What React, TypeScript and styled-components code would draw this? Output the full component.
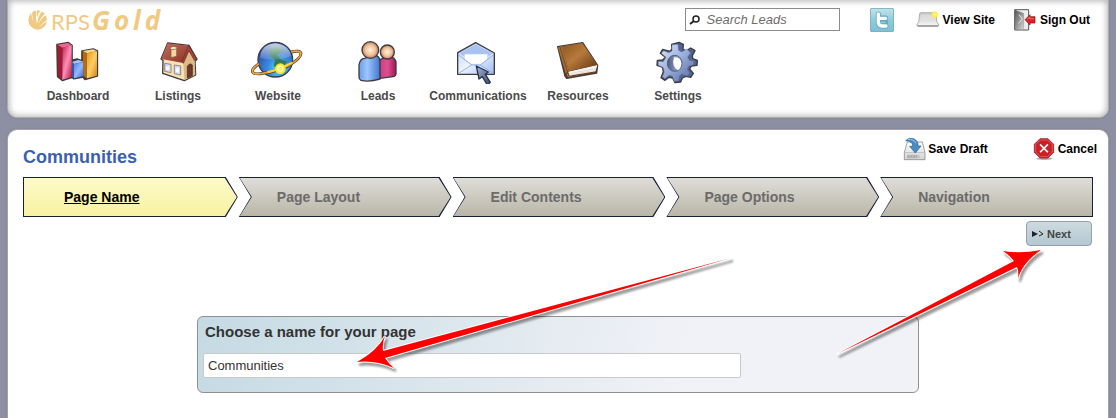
import React from 'react';
import styled, { createGlobalStyle } from 'styled-components';

const GlobalStyle = createGlobalStyle`
  * { box-sizing: border-box; }
  body {
    margin: 0;
    background: #8d90a2;
    color: #000;
    font-family: "Liberation Sans", Arial, sans-serif;
    font-size: 12px;
  }
`;

const Page = styled.div`
  display: flex;
  flex-direction: column;
  gap: 11px;
  min-height: 100vh;
  padding: 0 7px;
`;

const Header = styled.header`
  height: 118px;
  padding: 8px 18px 0 20px;
  background: #fff;
  border: 1px solid #acacb0;
  border-top: 0;
  border-radius: 0 0 10px 10px;
  box-shadow: inset 0 0 6px 1px #b0b0b0, 0 0 2px #77798a;
`;

const TopBar = styled.div`
  display: flex;
  justify-content: space-between;
  height: 30px;
`;

const Logo = styled.a`
  display: flex;
  align-items: baseline;
  height: 24px;
  color: #f0ca82;
  font-family: "Open Sans", sans-serif;
  font-size: 24px;
  line-height: 24px;
  text-decoration: none;
`;

const LogoLight = styled.span`
  margin-left: 3px;
  font-family: Lato, sans-serif;
  font-size: 22px;
  font-weight: 400;
`;

const LogoBold = styled.span`
  display: flex;
  gap: 4px;
  margin-left: 2px;
  font-size: 26px;
  font-weight: 700;
  font-style: italic;
`;

const Tools = styled.div`
  display: flex;
  align-items: flex-start;
`;

const SearchBox = styled.label`
  display: flex;
  align-items: center;
  width: 155px;
  height: 23px;
  margin-right: 30px;
  padding-left: 3px;
  background: #fff;
  border: 1px solid #8c8c8c;
`;

const SearchInput = styled.input`
  flex: 1;
  min-width: 0;
  padding: 0 0 0 6px;
  border: 0;
  outline: 0;
  background: transparent;
  font: italic 13px "Liberation Sans", Arial, sans-serif;
  &::placeholder { color: #6e6e6e; opacity: 1; }
`;

const ToolLink = styled.a<{ $space?: number }>`
  display: flex;
  align-items: center;
  gap: 3px;
  height: 24px;
  margin-left: ${(p) => p.$space ?? 0}px;
  color: #000;
  font-size: 12px;
  font-weight: 700;
  text-decoration: none;
  white-space: nowrap;
`;

const Nav = styled.nav`
  display: flex;
`;

const NavItem = styled.a`
  display: flex;
  flex-direction: column;
  align-items: center;
  width: 100px;
  gap: 4px;
  color: #4a4a4a;
  font-weight: 700;
  line-height: 16px;
  text-decoration: none;
`;

const Main = styled.main`
  position: relative;
  flex: 1;
  padding: 7px 15px 24px;
  background: #fff;
  border: 1px solid #a4a4a8;
  border-bottom: 0;
  border-radius: 10px 10px 0 0;
  box-shadow: 0 0 2px #77798a;
`;

const TitleRow = styled.div`
  display: flex;
  justify-content: space-between;
  height: 40px;
  margin-right: -4px;
`;

const Title = styled.h1`
  margin: 9px 0 0;
  color: #3b5fb2;
  font-size: 18px;
  line-height: 22px;
`;

const Actions = styled.div`
  display: flex;
  align-items: flex-start;
  gap: 45px;
`;

const ActionButton = styled.button`
  display: flex;
  align-items: center;
  gap: 1px;
  height: 24px;
  padding: 0;
  border: 0;
  background: none;
  color: #000;
  font: 700 12px "Liberation Sans", Arial, sans-serif;
  cursor: pointer;
`;

const Steps = styled.ol`
  display: flex;
  gap: 1px;
  margin: 0;
  padding: 0;
  list-style: none;
`;

type Edge = 'first' | 'middle' | 'last';

const shape = (edge: Edge) => {
  const right = edge === 'last' ? '100% 0, 100% 100%' : 'calc(100% - 12px) 0, 100% 50%, calc(100% - 12px) 100%';
  const left = edge === 'first' ? '0 100%' : '0 100%, 12px 50%';
  return `polygon(0 0, ${right}, ${left})`;
};

const Step = styled.li<{ $edge: Edge; $active?: boolean }>`
  flex: 1 1 ${(p) => (p.$edge === 'first' ? 4 : 2)}px;
  height: 40px;
  padding: 1px;
  background: #16203a;
  clip-path: ${(p) => shape(p.$edge)};

  a {
    display: block;
    height: 38px;
    padding-left: ${(p) => (p.$edge === 'first' ? 40 : 37)}px;
    clip-path: ${(p) => shape(p.$edge)};
    background: ${(p) =>
      p.$active ? 'linear-gradient(#fdfacb, #f7f2a0)' : 'linear-gradient(#dfddd7, #b9b6a8)'};
    color: ${(p) => (p.$active ? '#000' : '#6b6b6b')};
    font-size: 14px;
    font-weight: 700;
    line-height: 38px;
    text-decoration: ${(p) => (p.$active ? 'underline' : 'none')};
  }
`;

const NextButton = styled.button`
  display: flex;
  align-items: center;
  gap: 3px;
  width: 66px;
  height: 25px;
  margin: 4px 1px 0 auto;
  padding: 0 0 0 5px;
  border: 1px solid #9a9cb0;
  border-radius: 4px;
  background: linear-gradient(#cddbe0, #b3c8d0);
  color: #444;
  font: 700 11px "Liberation Sans", Arial, sans-serif;
  cursor: pointer;
`;

const NameCard = styled.form`
  width: 722px;
  max-width: 100%;
  margin: 70px auto 0;
  padding: 4px 5px 14px;
  border: 1px solid #8f9094;
  border-radius: 6px;
  background: linear-gradient(100deg, #c5dae3, #f1f2f7 68%);
`;

const NameLabel = styled.label`
  display: block;
  margin: 0 2px 11px;
  color: #333;
  font-size: 15px;
  font-weight: 700;
  line-height: 21px;
`;

const NameInput = styled.input`
  display: block;
  width: 538px;
  max-width: 100%;
  height: 25px;
  padding: 0 4px;
  border: 1px solid #c9c9c9;
  border-radius: 2px;
  background: #fff;
  color: #333;
  font: 13px "Liberation Sans", Arial, sans-serif;
`;

/* Pointer arrows drawn over the form */
const Arrow = styled.svg<{ $top: number }>`
  position: absolute;
  top: ${(p) => p.$top}px;
  pointer-events: none;
  overflow: visible;
  filter: drop-shadow(2px 3px 1px rgba(0, 0, 0, 0.4));
`;

const NameArrow = styled(Arrow)`
  left: calc(50% - 201px);
`;

const NextArrow = styled(Arrow)`
  right: 67px;
`;

const ink = { stroke: '#3c3c40', strokeWidth: 4, strokeLinejoin: 'round' as const };

const NavIcon = ({ view, children }: { view: string; children: React.ReactNode }) => (
  <svg width="54" height="46" viewBox={view} aria-hidden="true">{children}</svg>
);

const SmallIcon = ({ view, children }: { view: string; children: React.ReactNode }) => (
  <svg width="24" height="24" viewBox={view} aria-hidden="true">{children}</svg>
);

const DashboardIcon = () => (
  <NavIcon view="153 114 162 138">
    <defs>
      <linearGradient id="barRed" x2="1" y2="1"><stop offset="0" stopColor="#c3224b" /><stop offset=".5" stopColor="#ff8fb9" /><stop offset="1" stopColor="#b3153a" /></linearGradient>
      <linearGradient id="barBlue" x2="1" y2="1"><stop offset="0" stopColor="#4f7fe0" /><stop offset=".5" stopColor="#93b8ff" /><stop offset="1" stopColor="#3564c9" /></linearGradient>
      <linearGradient id="barGold" x2="1" y2="1"><stop offset="0" stopColor="#e39a20" /><stop offset=".5" stopColor="#ffce64" /><stop offset="1" stopColor="#cf8110" /></linearGradient>
    </defs>
    <path d="M171 134 205 128 216 136V181L231 177 246 182V153L280 147 292 153V228L255 238 249 231 222 236 215 232 187 241 173 230Z" fill="#444" stroke="#3c3c40" strokeWidth="5" strokeLinejoin="round" />
    <path d="M172 134 188 143 187 239 174 229Z" fill="#a11a33" />
    <path d="M172 134 204 129 215 136 188 143Z" fill="#f0658b" />
    <path d="M188 143 215 136V231L187 239Z" fill="url(#barRed)" />
    <path d="M216 186 235 180 251 185 222 192Z" fill="#a6c5ff" />
    <path d="M216 186 222 192V235L216 230Z" fill="#2f55ae" />
    <path d="M222 192 251 186V228L222 235Z" fill="url(#barBlue)" />
    <path d="M248 153 280 148 291 154 261 160Z" fill="#ffd580" />
    <path d="M248 153 261 160V235L251 229Z" fill="#b36a12" />
    <path d="M261 160 291 154V227L261 235Z" fill="url(#barGold)" />
  </NavIcon>
);

const ListingsIcon = () => (
  <NavIcon view="453 114 162 138">
    <defs>
      <linearGradient id="roof" x2="1" y2="1"><stop offset="0" stopColor="#c47060" /><stop offset="1" stopColor="#8e2f27" /></linearGradient>
    </defs>
    <path d="M503 129 567 136 591 178 585 184 587 225 553 242 488 220 489 181 483 177Z" fill="#f7e2b5" {...ink} />
    <path d="M550 188 570 148 584 180 586 224 553 240Z" fill="#dcb985" />
    <path d="M503 130 566 137 546 188 484 177Z" fill="url(#roof)" />
    <path d="M566 137 591 177 583 181 567 152 550 190 546 186Z" fill="#a4453a" stroke="#5b231e" strokeWidth="2" />
    <path d="M513 146 530 144V169L513 173Z" fill="#f0d59f" stroke="#7d5137" strokeWidth="2" />
    <path d="M511 143 519 139 531 142 530 147 512 149Z" fill="#fff0cc" stroke="#7d5137" strokeWidth="2" />
    <path d="M494 190 513 193V218L494 214ZM523 195 542 198V225L523 221Z" fill="#cbd9ff" stroke="#9f8775" strokeWidth="3" />
    <path d="M498 200 508 197V211L498 209ZM527 205 537 202V218L527 216Z" fill="#f8fbff" />
    <path d="M562 234V199Q570 187 577 195V227Z" fill="#71372b" stroke="#442018" strokeWidth="2" />
  </NavIcon>
);

const WebsiteIcon = () => (
  <NavIcon view="93 24 162 138">
    <defs>
      <radialGradient id="globe" cx=".6" cy=".75" r=".75"><stop offset="0" stopColor="#55e5f5" /><stop offset=".4" stopColor="#3b8fe0" /><stop offset="1" stopColor="#2946a6" /></radialGradient>
      <linearGradient id="shine" x2="0" y2="1"><stop offset="0" stopColor="#fff" stopOpacity=".75" /><stop offset="1" stopColor="#fff" stopOpacity=".1" /></linearGradient>
    </defs>
    <circle cx="166" cy="89" r="52" fill="url(#globe)" stroke="#3a3e4c" strokeWidth="4" />
    <path d="M147 51 173 46 190 56 184 68 171 74 184 89 202 94 188 116 175 128 161 106 165 91 150 79Z" fill="#35795c" />
    <path d="M120 83Q124 43 166 40Q206 44 213 78Q165 98 120 83Z" fill="url(#shine)" />
    <path d="M117 101C84 124 95 137 132 129Q165 126 207 106C260 74 247 57 214 66" fill="none" stroke="#4b4540" strokeWidth="9" />
    <path d="M117 101C84 124 95 137 132 129Q165 126 207 106C260 74 247 57 214 66" fill="none" stroke="#f7a52f" strokeWidth="5" />
    <path d="M142 126Q175 120 216 98" fill="none" stroke="#ffd333" strokeWidth="6" />
    <circle cx="181" cy="116" r="14" fill="#f7ef38" stroke="#ffe62b" strokeWidth="4" />
    <circle cx="181" cy="116" r="8" fill="#ffef50" stroke="#fff" strokeWidth="3" />
  </NavIcon>
);

const LeadsIcon = () => (
  <NavIcon view="393 24 162 138">
    <defs>
      <linearGradient id="manBlue"><stop offset="0" stopColor="#6a9ce8" /><stop offset=".4" stopColor="#9cc6ff" /><stop offset="1" stopColor="#4375cd" /></linearGradient>
      <linearGradient id="manPink"><stop offset="0" stopColor="#d23b83" /><stop offset=".5" stopColor="#db5092" /><stop offset="1" stopColor="#a21450" /></linearGradient>
      <radialGradient id="face"><stop offset="0" stopColor="#fff0dc" /><stop offset=".6" stopColor="#f1c29b" /><stop offset="1" stopColor="#bc7e59" /></radialGradient>
    </defs>
    <path d="M478 96Q481 84 493 85L510 80Q528 83 528 100V132Q527 139 519 140L480 145Z" fill="url(#manPink)" {...ink} />
    <circle cx="502" cy="66" r="21" fill="url(#face)" {...ink} />
    <path d="M417 105Q420 86 433 85L464 75Q480 79 480 95V147Q448 157 423 151Q417 148 417 142Z" fill="url(#manBlue)" {...ink} />
    <circle cx="451" cy="60" r="25" fill="url(#face)" {...ink} />
  </NavIcon>
);

const CommunicationsIcon = () => (
  <NavIcon view="96 24 162 138">
    <defs>
      <linearGradient id="envelope" x2="1" y2="1"><stop offset="0" stopColor="#b7cff8" /><stop offset=".5" stopColor="#edf5ff" /><stop offset="1" stopColor="#9cb9f1" /></linearGradient>
      <linearGradient id="cursor" x2="1" y2="1"><stop offset="0" stopColor="#a9b7d2" /><stop offset="1" stopColor="#35476f" /></linearGradient>
    </defs>
    <path d="M116 68 170 38 226 69V133H116Z" fill="url(#envelope)" {...ink} />
    <path d="M121 70 170 43 221 70 205 81 138 81Z" fill="#a9c3f0" />
    <path d="M136 72H206V88L187 103H156L136 88Z" fill="#fff" stroke="#b6c8f3" strokeWidth="2" />
    <path d="M119 75 158 105H184L223 75M119 130 158 105M184 105 223 130" fill="none" stroke="#93b1ea" strokeWidth="3" />
    <path d="M172 108 208 126 199 133 214 157 205 165 190 140 180 147Z" fill="url(#cursor)" stroke="#2a344b" strokeWidth="4" strokeLinejoin="round" />
  </NavIcon>
);

const ResourcesIcon = () => (
  <NavIcon view="393 24 162 138">
    <defs>
      <linearGradient id="cover" x2="1" y2="1"><stop offset="0" stopColor="#8c531f" /><stop offset=".45" stopColor="#b77a3c" /><stop offset="1" stopColor="#5d3210" /></linearGradient>
    </defs>
    <path d="M413 50 488 38 533 106 530 129 440 145 435 138Z" fill="#6b3b17" {...ink} />
    <path d="M441 126 532 105 526 126 444 141Z" fill="#f4f4f2" />
    <path d="M443 132 528 115M443 137 526 120" stroke="#b7b7b7" strokeWidth="1" />
    <path d="M426 49 487 39 532 104 447 124Z" fill="url(#cover)" />
    <path d="M414 52 426 49 447 124 438 133Z" fill="#a97034" />
    <path d="M420 51 443 128" stroke="#5c3214" strokeWidth="2" />
    <path d="M438 134 443 126 447 139 528 126" fill="none" stroke="#704016" strokeWidth="4" />
  </NavIcon>
);

const SettingsIcon = () => (
  <NavIcon view="693 24 162 138">
    <defs>
      <linearGradient id="gear" x2="1" y2="1"><stop offset="0" stopColor="#e2eafc" /><stop offset=".45" stopColor="#a0b3df" /><stop offset="1" stopColor="#53699d" /></linearGradient>
      <linearGradient id="bore"><stop offset="0" stopColor="#4d5a7c" /><stop offset="1" stopColor="#b9c5e2" /></linearGradient>
    </defs>
    <path d="M755 43 777 37 790 43 789 57 798 63 812 54 825 62 817 77 818 86 832 91 831 106 814 108 809 117 820 130 812 142 798 139 787 144 782 156 765 158 758 144 747 142 735 151 723 143 730 125 727 111 711 106 712 91 728 90 736 82 721 70 728 58 750 64 756 57Z" fill="#53658f" {...ink} />
    <path d="M756 44 774 43 776 61 785 66 801 57 812 69 803 81 808 91 822 93 821 105 807 108 802 118 810 130 801 139 787 132 779 137 776 153 762 154 757 138 748 136 735 146 727 140 733 126 729 112 715 106 715 94 730 95 738 82 724 70 731 62 746 68 756 63Z" fill="url(#gear)" stroke="#4c5f8d" strokeWidth="1" />
    <ellipse cx="764" cy="100" rx="22" ry="24" fill="url(#bore)" stroke="#4d5c80" strokeWidth="3" />
    <path d="M762 82Q782 80 784 101Q782 119 773 120Q754 111 762 82Z" fill="#fff" />
  </NavIcon>
);

const ViewSiteIcon = () => (
  <SmallIcon view="738 26 72 72">
    <defs>
      <linearGradient id="laptop" x2="0" y2="1"><stop offset="0" stopColor="#c9c9c9" /><stop offset="1" stopColor="#f6f6f6" /></linearGradient>
      <radialGradient id="glow"><stop offset="0" stopColor="#fffbc0" /><stop offset=".5" stopColor="#ffec45" /><stop offset="1" stopColor="#ffec45" stopOpacity="0" /></radialGradient>
    </defs>
    <path d="M753 40H795Q798 40 798 44L801 70 806 74V80H741V74L746 70 749 44Q750 40 753 40Z" fill="url(#laptop)" stroke="#8f8f8f" strokeWidth="2" />
    <path d="M743 80H804" stroke="#777" strokeWidth="3" />
    <path d="M754 46H792L794 67H751Z" fill="#dfdfdf" opacity=".7" />
    <circle cx="794" cy="46" r="13" fill="url(#glow)" />
  </SmallIcon>
);

const SignOutIcon = () => (
  <SmallIcon view="1035 26 72 72">
    <defs>
      <linearGradient id="doorway" x2="1" y2="1"><stop offset="0" stopColor="#555" /><stop offset="1" stopColor="#d8d8d8" /></linearGradient>
    </defs>
    <path d="M1040 31H1082V92H1040Z" fill="#eee" stroke="#555" strokeWidth="3" />
    <path d="M1041 32 1067 42V91H1041Z" fill="url(#doorway)" stroke="#666" strokeWidth="1" />
    <path d="M1053 46 1063 59 1052 72" fill="none" stroke="#e8e8e8" strokeWidth="3" />
    <path d="M1071 61 1086 46V52H1101V71H1086V77Z" fill="#d9252a" stroke="#8e090e" strokeWidth="2" strokeLinejoin="round" />
    <path d="M1077 60 1085 53V58H1098" fill="none" stroke="#ff8d89" strokeWidth="2" />
  </SmallIcon>
);

const TwitterIcon = () => (
  <SmallIcon view="0 0 72 72">
    <defs>
      <linearGradient id="tile" x2="0" y2="1"><stop offset="0" stopColor="#c4e3ea" /><stop offset=".5" stopColor="#8fccdb" /><stop offset="1" stopColor="#7cc0d3" /></linearGradient>
    </defs>
    <rect x="1" y="1" width="70" height="70" rx="5" fill="url(#tile)" stroke="#76aebd" strokeWidth="3" />
    <path d="M25 18V42Q25 54 37 54H48M25 30H47M37 42H47" fill="none" stroke="#65a9bc" strokeWidth="15" strokeLinecap="round" strokeLinejoin="round" />
    <path d="M25 18V42Q25 54 37 54H48M25 31H47" fill="none" stroke="#fff" strokeWidth="10" strokeLinecap="round" strokeLinejoin="round" />
    <path d="M34 43H45" stroke="#8ccbda" strokeWidth="5" strokeLinecap="round" />
  </SmallIcon>
);

const SaveIcon = () => (
  <SmallIcon view="130 108 72 72">
    <defs>
      <linearGradient id="drive" x2="0" y2="1"><stop offset="0" stopColor="#fff" /><stop offset="1" stopColor="#d4d4d4" /></linearGradient>
    </defs>
    <path d="M143 123H188L196 154V176H134V154Z" fill="url(#drive)" stroke="#777" strokeWidth="2" strokeLinejoin="round" />
    <path d="M135 155H195" stroke="#aaa" strokeWidth="2" />
    <path d="M141 162H180V171H141Z" fill="#c4c4c4" />
    <path d="M145 161V172M150 161V172M155 161V172M160 161V172M165 161V172M170 161V172" stroke="#9c9c9c" strokeWidth="2" />
    <path d="M138 119Q147 108 162 113Q176 119 175 135H184L167 156 150 136H159Q161 121 138 119Z" fill="#4b8cc6" stroke="#28618f" strokeWidth="2" strokeLinejoin="round" />
    <path d="M145 116Q162 113 169 126" fill="none" stroke="#9acbed" strokeWidth="3" />
  </SmallIcon>
);

const CancelIcon = () => (
  <SmallIcon view="522 109 72 72">
    <ellipse cx="556" cy="174" rx="24" ry="4" fill="#aaa" />
    <path d="M543 114H567L584 131V155L567 172H543L526 155V131Z" fill="#ca2027" stroke="#8b0d13" strokeWidth="2" />
    <path d="M544 118H566L580 132V154L566 168H544L530 154V132Z" fill="none" stroke="#ef7777" strokeWidth="2" />
    <path d="M545 133 565 153M565 133 545 153" stroke="#fff" strokeWidth="5" strokeLinecap="square" />
  </SmallIcon>
);

const LogoMark = () => (
  <svg width="20" height="20" viewBox="0 0 60 60" aria-hidden="true">
    <ellipse cx="29" cy="30" rx="28" ry="29" fill="#f0ca82" />
    <path d="M12 4Q12 28 22 46Q11 28 9 7ZM25 0Q22 24 27 42 29 20 42 4L37 2Q29 12 27 24 25 10 28 0ZM28 50Q36 26 58 13L54 8Q36 22 28 50ZM33 52Q42 38 60 29V32Q44 40 33 52Z" fill="#fff" />
  </svg>
);

const navItems = [
  { label: 'Dashboard', icon: <DashboardIcon /> },
  { label: 'Listings', icon: <ListingsIcon /> },
  { label: 'Website', icon: <WebsiteIcon /> },
  { label: 'Leads', icon: <LeadsIcon /> },
  { label: 'Communications', icon: <CommunicationsIcon /> },
  { label: 'Resources', icon: <ResourcesIcon /> },
  { label: 'Settings', icon: <SettingsIcon /> },
];

const steps = ['Page Name', 'Page Layout', 'Edit Contents', 'Page Options', 'Navigation'];

const edgeOf = (i: number): Edge => (i === 0 ? 'first' : i === steps.length - 1 ? 'last' : 'middle');

export default function App() {
  return (
    <>
      <GlobalStyle />
      <Page>
        <Header>
          <TopBar>
            <Logo href="#">
              <LogoMark />
              <LogoLight>RPS</LogoLight>
              <LogoBold><span>G</span><span>o</span><span>l</span><span>d</span></LogoBold>
            </Logo>
            <Tools>
              <SearchBox>
                <svg width="12" height="12" viewBox="0 0 12 12" aria-hidden="true">
                  <circle cx="7" cy="5" r="3" fill="none" stroke="#222" strokeWidth="1.5" />
                  <path d="M5 7 1 10" stroke="#222" strokeWidth="2" />
                </svg>
                <SearchInput type="search" placeholder="Search Leads" aria-label="Search Leads" />
              </SearchBox>
              <ToolLink href="#" aria-label="Twitter"><TwitterIcon /></ToolLink>
              <ToolLink href="#" $space={22}><ViewSiteIcon />View Site</ToolLink>
              <ToolLink href="#" $space={18}><SignOutIcon />Sign Out</ToolLink>
            </Tools>
          </TopBar>
          <Nav>
            {navItems.map((item) => (
              <NavItem href="#" key={item.label}>{item.icon}{item.label}</NavItem>
            ))}
          </Nav>
        </Header>

        <Main>
          <TitleRow>
            <Title>Communities</Title>
            <Actions>
              <ActionButton type="button"><SaveIcon />Save Draft</ActionButton>
              <ActionButton type="button"><CancelIcon />Cancel</ActionButton>
            </Actions>
          </TitleRow>

          <Steps>
            {steps.map((label, i) => (
              <Step key={label} $edge={edgeOf(i)} $active={i === 0}>
                <a href="#">{label}</a>
              </Step>
            ))}
          </Steps>

          <NextButton type="button">
            <svg width="12" height="8" viewBox="0 0 12 8" aria-hidden="true">
              <path d="M0 1 6 4 0 7Z" fill="#222" />
              <path d="M7 1 11 4 7 6" fill="none" stroke="#222" />
            </svg>
            Next
          </NextButton>

          <NameCard>
            <NameLabel htmlFor="page-name">Choose a name for your page</NameLabel>
            <NameInput id="page-name" type="text" defaultValue="Communities" />
          </NameCard>

          <NameArrow $top={127} width="375" height="112" viewBox="0 0 375 112" aria-hidden="true">
            <path d="M0 105Q20 94 28 79Q25 86 26 94L374 1 28 101Q32 107 37 111Q18 103 0 105Z" fill="#f00" stroke="#fff" strokeWidth="2" paintOrder="stroke" />
          </NameArrow>
          <NextArrow $top={120} width="204" height="105" viewBox="0 0 204 105" aria-hidden="true">
            <path d="M204 0Q185 13 181 29Q182 22 180 17L0 104 177 11Q172 5 166 1Q184 4 204 0Z" fill="#f00" stroke="#fff" strokeWidth="2" paintOrder="stroke" />
          </NextArrow>
        </Main>
      </Page>
    </>
  );
}
